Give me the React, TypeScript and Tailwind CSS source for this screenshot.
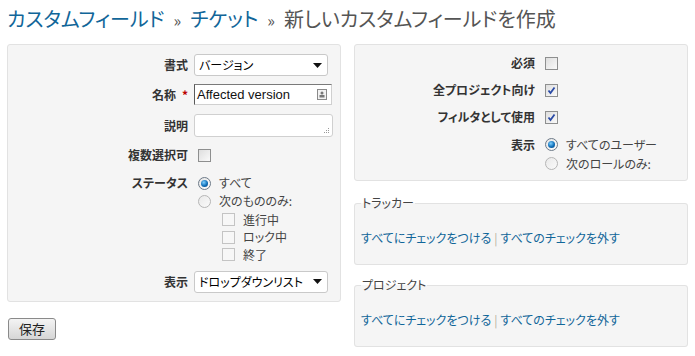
import React from "react";

const jp = "font-['Noto_Sans_CJK_JP','Noto_Sans',sans-serif] [font-feature-settings:'palt']";

function Check({ checked, light }: { checked?: boolean; light?: boolean }) {
  return (
    <span
      className={`inline-flex h-[13px] w-[13px] shrink-0 items-center justify-center border ${
        light
          ? "border-[#c4c4c4] bg-[#f7f7f7]"
          : "border-[#8e8f8f] bg-gradient-to-br from-[#dedede] to-[#fafafa]"
      }`}
    >
      {checked && (
        <svg width="9" height="9" viewBox="0 0 9 9">
          <path d="M1.5 4.5 L3.5 7 L7.5 1.5" fill="none" stroke="#2a4aa6" strokeWidth="1.8" />
        </svg>
      )}
    </span>
  );
}

function Radio({ checked }: { checked?: boolean }) {
  return (
    <span
      className={`inline-flex h-[13px] w-[13px] shrink-0 items-center justify-center rounded-full border ${
        checked
          ? "border-[#6d7a88] bg-gradient-to-br from-[#e6e6e6] to-[#fdfdfd]"
          : "border-[#b5b5b5] bg-gradient-to-br from-[#e9e9e9] to-[#fafafa]"
      }`}
    >
      {checked && (
        <span className="h-[7px] w-[7px] rounded-full bg-[radial-gradient(circle_at_40%_35%,#7fd0ff,#0f6fb8_55%,#0a3f78)]" />
      )}
    </span>
  );
}

function Select({ value, width }: { value: string; width: string }) {
  return (
    <div
      className={`flex h-[22px] ${width} items-center justify-between rounded-[3px] border border-[#c9c9c9] bg-white pl-[4px] pr-[5px] text-[12px] text-black`}
    >
      <span>{value}</span>
      <svg width="9" height="5" viewBox="0 0 9 5">
        <path d="M0 0 H9 L4.5 5 Z" fill="#111" />
      </svg>
    </div>
  );
}

function Row({ label, children, className = "", req }: { label: string; children: React.ReactNode; className?: string; req?: boolean }) {
  return (
    <div className={`flex ${className}`}>
      <div className="flex w-[180px] items-center justify-end text-[12px] font-bold text-[#333]">
        {label}
        {req && <span className="ml-[6px] text-[#bb0000]">*</span>}
      </div>
      <div className="ml-[6px] flex items-center">{children}</div>
    </div>
  );
}

function LinksBox({ title, mt }: { title: string; mt: string }) {
  return (
    <fieldset className={`${mt} rounded-[3px] border border-[#e2e2e2] bg-[#f5f5f5] px-[6px] pb-[18px]`}>
      <legend className="px-[1px] text-[12px] leading-[14px] text-[#444]">{title}</legend>
      <div className="mt-[20px] text-[12px] leading-[16px] text-[#169]">
        <span>すべてにチェックをつける</span>
        <span className="mx-[3px] text-[#b8b0a0]">|</span>
        <span>すべてのチェックを外す</span>
      </div>
    </fieldset>
  );
}

export default function App() {
  return (
    <div className={`h-[356px] w-[695px] bg-white px-[7px] pt-[5px] ${jp}`}>
      <h2 className="h-[39px] text-[20px] leading-[28px] text-[#555]">
        <span className="text-[#169]">カスタムフィールド</span>
        <span className="mx-[9px] text-[16px]">»</span>
        <span className="text-[#169]">チケット</span>
        <span className="mx-[9px] text-[16px]">»</span>
        新しいカスタムフィールドを作成
      </h2>

      <div className="flex gap-[13px]">
        {/* left column */}
        <div className="w-[335px]">
          <div className="rounded-[3px] border border-[#e2e2e2] bg-[#f5f5f5] pb-[8px] pt-[9px]">
            <Row label="書式" className="h-[22px]">
              <Select value="バージョン" width="w-[134px]" />
            </Row>
            <Row label="名称" req className="mt-[8px] h-[21px]">
              <div className="flex h-[21px] w-[138px] items-center justify-between border border-[#d0d0d0] border-l-[#5a5a5a] border-t-[#7a7a7a] bg-white pl-[2px] pr-[4px] font-['Liberation_Sans',sans-serif] text-[13px] text-[#111]">
                <span>Affected version</span>
                <svg width="10" height="11" viewBox="0 0 10 11">
                  <rect x="0.5" y="0.5" width="9" height="10" fill="#f2f2f2" stroke="#8a8a8a" />
                  <circle cx="5" cy="4" r="1.5" fill="#777" />
                  <rect x="2.5" y="6" width="5" height="2.5" fill="#777" />
                </svg>
              </div>
            </Row>
            <Row label="説明" className="mt-[9px] h-[23px]">
              <div className="relative h-[23px] w-[139px] rounded-[3px] border border-[#d0d0d0] bg-white">
                <svg className="absolute bottom-[2px] right-[2px]" width="6" height="6" viewBox="0 0 6 6">
                  <rect x="4" y="0" width="1" height="1" fill="#999" />
                  <rect x="2" y="2" width="1" height="1" fill="#999" />
                  <rect x="4" y="2" width="1" height="1" fill="#999" />
                  <rect x="0" y="4" width="1" height="1" fill="#999" />
                  <rect x="2" y="4" width="1" height="1" fill="#999" />
                  <rect x="4" y="4" width="1" height="1" fill="#999" />
                </svg>
              </div>
            </Row>
            <Row label="複数選択可" className="mt-[9px] h-[18px]">
              <span className="ml-[4px] flex">
                <Check />
              </span>
            </Row>
            <div className="mt-[10px] flex">
              <div className="flex h-[18px] w-[180px] items-center justify-end text-[12px] font-bold text-[#333]">
                ステータス
              </div>
              <div className="ml-[6px] flex flex-col text-[12px] text-[#444]">
                <div className="flex h-[18px] items-center gap-[8px] pl-[4px]">
                  <Radio checked />
                  すべて
                </div>
                <div className="flex h-[18px] items-center gap-[8px] pl-[4px]">
                  <Radio />
                  次のもののみ:
                </div>
                <div className="mt-[1px] flex h-[17.5px] items-center gap-[8px] pl-[28px]">
                  <Check light />
                  進行中
                </div>
                <div className="flex h-[17.5px] items-center gap-[8px] pl-[28px]">
                  <Check light />
                  ロック中
                </div>
                <div className="flex h-[17.5px] items-center gap-[8px] pl-[28px]">
                  <Check light />
                  終了
                </div>
              </div>
            </div>
            <Row label="表示" className="mt-[7px] h-[22px]">
              <Select value="ドロップダウンリスト" width="w-[134px]" />
            </Row>
          </div>
          <button className="ml-[1px] mt-[16px] h-[22px] w-[48px] rounded-[3px] border border-[#8a8a8a] bg-gradient-to-b from-[#f4f4f4] to-[#d6d6d6] text-[13px] leading-[18px] text-[#222]">
            保存
          </button>
        </div>

        {/* right column */}
        <div className="w-[335px]">
          <div className="rounded-[3px] border border-[#e2e2e2] bg-[#f5f5f5] pb-[7px] pt-[9px]">
            <Row label="必須" className="h-[18px]">
              <span className="ml-[4px] flex">
                <Check />
              </span>
            </Row>
            <Row label="全プロジェクト向け" className="mt-[9px] h-[18px]">
              <span className="ml-[4px] flex">
                <Check checked />
              </span>
            </Row>
            <Row label="フィルタとして使用" className="mt-[9px] h-[18px]">
              <span className="ml-[4px] flex">
                <Check checked />
              </span>
            </Row>
            <div className="mt-[9px] flex">
              <div className="flex h-[19px] w-[180px] items-center justify-end text-[12px] font-bold text-[#333]">
                表示
              </div>
              <div className="ml-[6px] flex flex-col text-[12px] text-[#444]">
                <div className="flex h-[19px] items-center gap-[8px] pl-[4px]">
                  <Radio checked />
                  すべてのユーザー
                </div>
                <div className="flex h-[19px] items-center gap-[8px] pl-[4px]">
                  <Radio />
                  次のロールのみ:
                </div>
              </div>
            </div>
          </div>
          <LinksBox title="トラッカー" mt="mt-[15px]" />
          <LinksBox title="プロジェクト" mt="mt-[13px]" />
        </div>
      </div>
    </div>
  );
}
